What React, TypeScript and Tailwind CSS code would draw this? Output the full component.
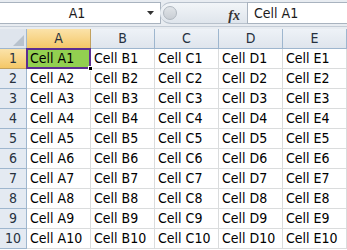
import React from "react";

const cols = ["A", "B", "C", "D", "E"];
const rows = [1, 2, 3, 4, 5, 6, 7, 8, 9, 10];

export default function App() {
  return (
    <div
      className="w-[347px] h-[250px] overflow-hidden bg-white text-black font-stretch-condensed"
      style={{ fontFamily: '"DejaVu Sans Condensed", "DejaVu Sans", Tahoma, sans-serif' }}
    >
      {/* Formula bar */}
      <div className="h-[26px] bg-[#e8ecf1] flex items-stretch pt-[2px] pb-[2px]">
        <div className="w-[161px] bg-white border-t border-b border-r border-[#a9b3bf] relative flex items-center justify-center text-[14px] text-[#1b1b1b]">
          <span className="ml-[-6px]">A1</span>
          <svg className="absolute right-[6px] top-[8px]" width="7" height="4" viewBox="0 0 7 4">
            <path d="M0 0 H7 L3.5 4 Z" fill="#333" />
          </svg>
        </div>
        <div className="w-[87px] relative flex items-center border-t border-b border-[#b7c0cb] bg-gradient-to-b from-[#f2f5f8] to-[#dfe5ec] rounded-l-[11px] -ml-[1px]">
          <div className="w-[14px] h-[14px] rounded-full ml-[3px] bg-gradient-to-b from-[#e0e4e8] to-[#c9ced4] border border-[#b0b7bf]" />
          <span
            className="absolute right-[7px] top-[2px] text-[14px] italic font-bold text-[#333]"
            style={{ fontFamily: '"Liberation Serif", serif', fontStretch: "normal" }}
          >
            fx
          </span>
        </div>
        <div className="flex-1 bg-white border border-r-0 border-[#a9b3bf] flex items-center pl-[6px] text-[14px] text-[#1b1b1b]">
          Cell A1
        </div>
      </div>
      <div className="h-[3px] bg-[#e8ecf1] border-t border-[#c4ccd6]" />

      {/* Grid */}
      <div className="grid grid-cols-[27px_repeat(5,64px)] grid-rows-[20px_repeat(10,20px)]">
        {/* corner */}
        <div className="relative bg-[#dfe5ed] border-r border-b border-[#9eb6ce]">
          <svg className="absolute right-[2px] bottom-[2px]" width="11" height="11" viewBox="0 0 11 11">
            <path d="M11 0 V11 H0 Z" fill="#b8c2cd" />
          </svg>
        </div>
        {cols.map((c) => (
          <div
            key={c}
            className={
              c === "A"
                ? "flex items-center justify-center text-[14px] text-[#27313f] bg-gradient-to-b from-[#fbe3a9] to-[#f4c766] border-r border-b border-[#c2a15e]"
                : "flex items-center justify-center text-[14px] text-[#27313f] bg-gradient-to-b from-[#eef2f7] to-[#dfe5ed] border-r border-b border-[#9eb6ce]"
            }
          >
            {c}
          </div>
        ))}
        {rows.map((r) => (
          <React.Fragment key={r}>
            <div
              className={
                r === 1
                  ? "flex items-center justify-center text-[14px] text-[#27313f] bg-gradient-to-b from-[#fbe3a9] to-[#f4c766] border-r border-b border-[#c2a15e]"
                  : "flex items-center justify-center text-[14px] text-[#27313f] bg-[#e4eaf2] border-r border-b border-[#9eb6ce]"
              }
            >
              {r}
            </div>
            {cols.map((c) =>
              r === 1 && c === "A" ? (
                <div
                  key={c}
                  className="relative bg-[#92d050] border-r border-b border-[#d4d4d4] flex items-center pl-[3px] text-[14px] whitespace-nowrap"
                >
                  <div className="absolute -left-[1px] -top-[1px] -right-[1px] -bottom-[1px] border-2 border-[#5c2d91] pointer-events-none" />
                  <div className="absolute -right-[3px] -bottom-[3px] w-[5px] h-[5px] bg-black border border-white z-10" />
                  <span className="relative">Cell {c}{r}</span>
                </div>
              ) : (
                <div
                  key={c}
                  className="border-r border-b border-[#dadcdd] flex items-center pl-[3px] text-[14px] whitespace-nowrap overflow-hidden"
                >
                  Cell {c}
                  {r}
                </div>
              )
            )}
          </React.Fragment>
        ))}
      </div>
    </div>
  );
}
